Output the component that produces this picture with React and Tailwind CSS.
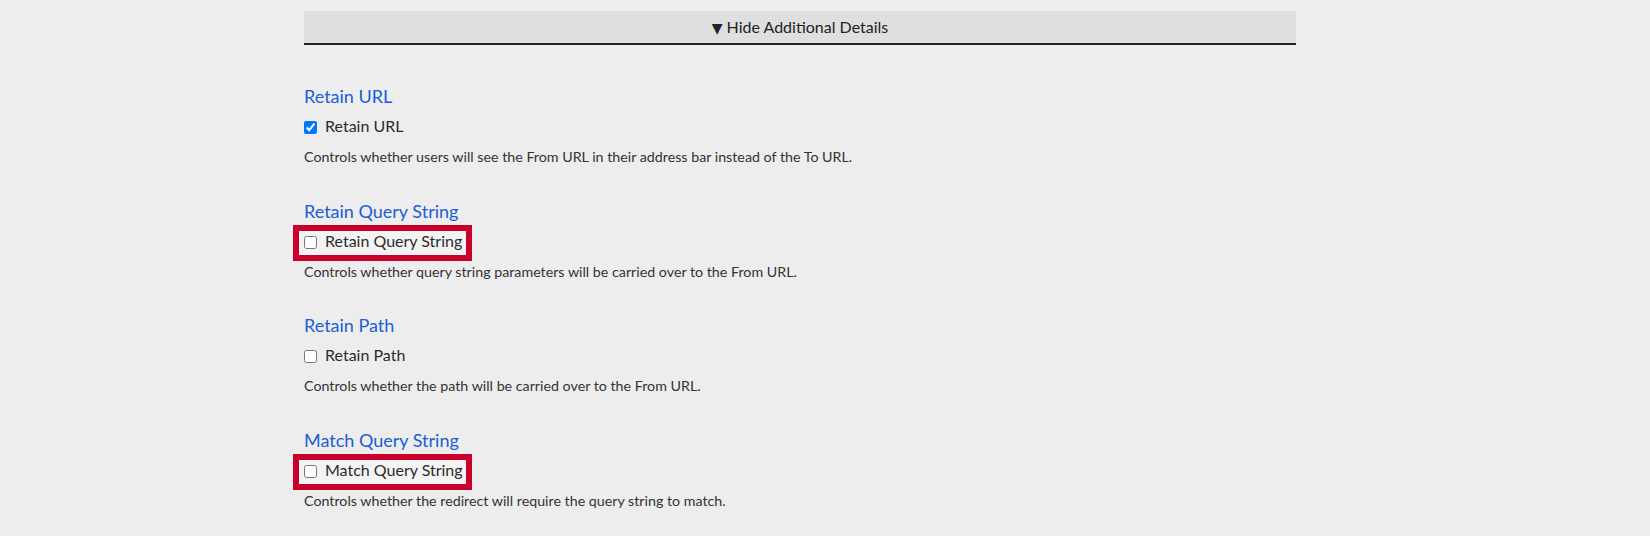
const options = [
  {
    title: 'Retain URL',
    label: 'Retain URL',
    checked: true,
    note: 'Controls whether users will see the From URL in their address bar instead of the To URL.',
  },
  {
    title: 'Retain Query String',
    label: 'Retain Query String',
    checked: false,
    marked: true,
    note: 'Controls whether query string parameters will be carried over to the From URL.',
  },
  {
    title: 'Retain Path',
    label: 'Retain Path',
    checked: false,
    note: 'Controls whether the path will be carried over to the From URL.',
  },
  {
    title: 'Match Query String',
    label: 'Match Query String',
    checked: false,
    marked: true,
    note: 'Controls whether the redirect will require the query string to match.',
  },
];

function Option({ o }){
  return (
    <div className="mb-[32.5px]">
      <h3 className="text-[18px] leading-[22px] text-[#1a5dd6] font-normal">{o.title}</h3>
      <div className="flex mt-[9px]">
        <label className="relative flex items-start h-[20px]">
          {o.marked && (
            <span className="absolute -left-[11px] -top-[6px] w-[179px] h-[36px] border-[6px] border-[#c9002b] bg-[#f3f3f3]" />
          )}
          <input type="checkbox" defaultChecked={o.checked} className="relative mt-[5px] w-[13px] h-[13px]" />
          <span className="relative ml-[8px] text-[16px] leading-[20px] text-[#2b2b2b]">{o.label}</span>
        </label>
      </div>
      <p className="mt-[11px] text-[14.25px] leading-[20px] text-[#333]">{o.note}</p>
    </div>
  );
}

export default function App(){
  return (
    <div className="min-h-screen bg-[#ededed] font-['Lato','Liberation_Sans',sans-serif]">
      <div className="pl-[304px] pt-[11px]">
        <div className="w-[992px]">
          <div className="h-[34px] bg-[#dfdfdf] border-b-2 border-[#222] text-center text-[16px] leading-[32px] text-[#222] cursor-pointer">
            <span className="font-['DejaVu_Sans',sans-serif] text-[14px]">▼</span> Hide Additional Details
          </div>
          <div className="mt-[40px]">
            {options.map(o => <Option key={o.title} o={o} />)}
          </div>
        </div>
      </div>
    </div>
  );
}
